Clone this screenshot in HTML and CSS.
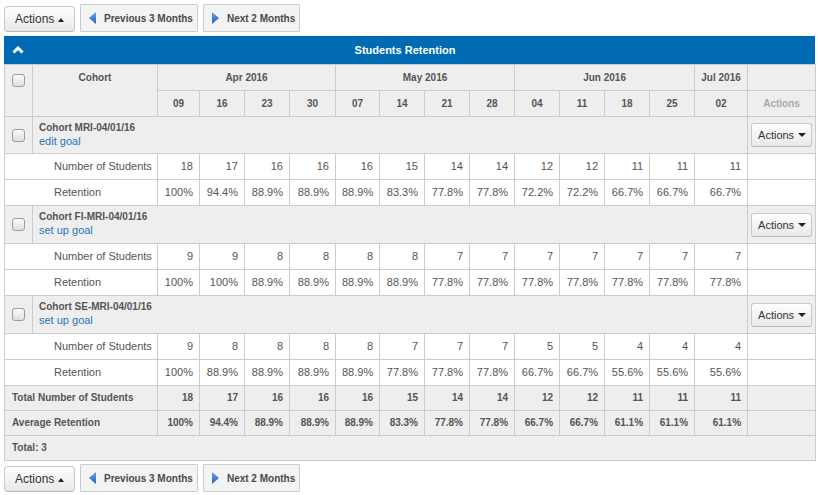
FILE: index.html
```html
<!DOCTYPE html>
<html>
<head>
<meta charset="utf-8">
<link rel="stylesheet" href="styles.css">
</head>
<body>
<div class="page">
  <div class="toolbar">
    <button class="btn-actions">Actions <span class="caret-up"></span></button>
    <button class="btn-nav"><svg class="nav-ico" width="7" height="12" viewBox="0 0 7 12"><defs><linearGradient id="gl" x1="0" y1="0" x2="0" y2="1"><stop offset="0" stop-color="#6aa6e6"/><stop offset="1" stop-color="#1f62b0"/></linearGradient></defs><path d="M7 0 L0 6 L7 12 Z" fill="url(#gl)"/></svg>Previous 3 Months</button>
    <button class="btn-nav"><svg class="nav-ico" width="7" height="12" viewBox="0 0 7 12"><defs><linearGradient id="gr" x1="0" y1="0" x2="0" y2="1"><stop offset="0" stop-color="#6aa6e6"/><stop offset="1" stop-color="#1f62b0"/></linearGradient></defs><path d="M0 0 L7 6 L0 12 Z" fill="url(#gr)"/></svg>Next 2 Months</button>
  </div>

  <div class="panel">
    <div class="panel-head">
      <svg class="chev" width="12" height="8" viewBox="0 0 12 8"><path d="M1.5 6.5 L6 2 L10.5 6.5" fill="none" stroke="#fff" stroke-width="3"/></svg>
      <span class="title">Students Retention</span>
      <span></span>
    </div>
    <table class="grid">
      <colgroup>
        <col class="c-chk"><col class="c-cohort">
        <col class="c-d1"><col class="c-d"><col class="c-d"><col class="c-d46">
        <col class="c-d44"><col class="c-d"><col class="c-d"><col class="c-d">
        <col class="c-d"><col class="c-d"><col class="c-d"><col class="c-d">
        <col class="c-jul"><col class="c-act">
      </colgroup>
      <thead>
        <tr class="hrow">
          <th rowspan="2" class="chk-h"><span class="chk"></span></th>
          <th rowspan="2" class="cohort-h">Cohort</th>
          <th colspan="4">Apr 2016</th>
          <th colspan="4">May 2016</th>
          <th colspan="4">Jun 2016</th>
          <th>Jul 2016</th>
          <th></th>
        </tr>
        <tr class="hrow">
          <th>09</th><th>16</th><th>23</th><th>30</th>
          <th>07</th><th>14</th><th>21</th><th>28</th>
          <th>04</th><th>11</th><th>18</th><th>25</th>
          <th>02</th><th class="act-h">Actions</th>
        </tr>
      </thead>
      <tbody>
        <tr class="cohort">
          <td class="chk-c"><span class="chk"></span></td>
          <td colspan="14" class="cohort-info"><div class="cname">Cohort MRI-04/01/16</div><a class="goal">edit goal</a></td>
          <td class="act-c"><button class="btn-row">Actions <span class="caret-down"></span></button></td>
        </tr>
        <tr class="drow">
          <td colspan="2" class="lbl">Number of Students</td>
          <td>18</td><td>17</td><td>16</td><td>16</td><td>16</td><td>15</td><td>14</td><td>14</td><td>12</td><td>12</td><td>11</td><td>11</td><td>11</td><td></td>
        </tr>
        <tr class="drow">
          <td colspan="2" class="lbl">Retention</td>
          <td>100%</td><td>94.4%</td><td>88.9%</td><td>88.9%</td><td>88.9%</td><td>83.3%</td><td>77.8%</td><td>77.8%</td><td>72.2%</td><td>72.2%</td><td>66.7%</td><td>66.7%</td><td>66.7%</td><td></td>
        </tr>

        <tr class="cohort">
          <td class="chk-c"><span class="chk"></span></td>
          <td colspan="14" class="cohort-info tall"><div class="cname">Cohort FI-MRI-04/01/16</div><a class="goal">set up goal</a></td>
          <td class="act-c"><button class="btn-row">Actions <span class="caret-down"></span></button></td>
        </tr>
        <tr class="drow">
          <td colspan="2" class="lbl">Number of Students</td>
          <td>9</td><td>9</td><td>8</td><td>8</td><td>8</td><td>8</td><td>7</td><td>7</td><td>7</td><td>7</td><td>7</td><td>7</td><td>7</td><td></td>
        </tr>
        <tr class="drow">
          <td colspan="2" class="lbl">Retention</td>
          <td>100%</td><td>100%</td><td>88.9%</td><td>88.9%</td><td>88.9%</td><td>88.9%</td><td>77.8%</td><td>77.8%</td><td>77.8%</td><td>77.8%</td><td>77.8%</td><td>77.8%</td><td>77.8%</td><td></td>
        </tr>

        <tr class="cohort">
          <td class="chk-c"><span class="chk"></span></td>
          <td colspan="14" class="cohort-info tall"><div class="cname">Cohort SE-MRI-04/01/16</div><a class="goal">set up goal</a></td>
          <td class="act-c"><button class="btn-row">Actions <span class="caret-down"></span></button></td>
        </tr>
        <tr class="drow">
          <td colspan="2" class="lbl">Number of Students</td>
          <td>9</td><td>8</td><td>8</td><td>8</td><td>8</td><td>7</td><td>7</td><td>7</td><td>5</td><td>5</td><td>4</td><td>4</td><td>4</td><td></td>
        </tr>
        <tr class="drow">
          <td colspan="2" class="lbl">Retention</td>
          <td>100%</td><td>88.9%</td><td>88.9%</td><td>88.9%</td><td>88.9%</td><td>77.8%</td><td>77.8%</td><td>77.8%</td><td>66.7%</td><td>66.7%</td><td>55.6%</td><td>55.6%</td><td>55.6%</td><td></td>
        </tr>
      </tbody>
      <tfoot>
        <tr class="trow">
          <td colspan="2" class="tlbl">Total Number of Students</td>
          <td>18</td><td>17</td><td>16</td><td>16</td><td>16</td><td>15</td><td>14</td><td>14</td><td>12</td><td>12</td><td>11</td><td>11</td><td>11</td><td></td>
        </tr>
        <tr class="trow">
          <td colspan="2" class="tlbl">Average Retention</td>
          <td>100%</td><td>94.4%</td><td>88.9%</td><td>88.9%</td><td>88.9%</td><td>83.3%</td><td>77.8%</td><td>77.8%</td><td>66.7%</td><td>66.7%</td><td>61.1%</td><td>61.1%</td><td>61.1%</td><td></td>
        </tr>
        <tr class="trow">
          <td colspan="16" class="tlbl">Total: 3</td>
        </tr>
      </tfoot>
    </table>
  </div>

  <div class="toolbar bottom">
    <button class="btn-actions">Actions <span class="caret-up"></span></button>
    <button class="btn-nav"><svg class="nav-ico" width="7" height="12" viewBox="0 0 7 12"><path d="M7 0 L0 6 L7 12 Z" fill="url(#gl)"/></svg>Previous 3 Months</button>
    <button class="btn-nav"><svg class="nav-ico" width="7" height="12" viewBox="0 0 7 12"><path d="M0 0 L7 6 L0 12 Z" fill="url(#gr)"/></svg>Next 2 Months</button>
  </div>
</div>
</body>
</html>
```

FILE: styles.css
```css
html, body {
  margin: 0;
  padding: 0;
  background: #fff;
}
body {
  font-family: "Liberation Sans", Arial, sans-serif;
  font-size: 11px;
  color: #555;
}
.page {
  padding: 4px 3px 0 4px;
}
.toolbar {
  display: flex;
  align-items: flex-start;
  gap: 5px;
  height: 28px;
}
.toolbar.bottom {
  margin-top: 3px;
}
button {
  font-family: "Liberation Sans", Arial, sans-serif;
  margin: 0;
  cursor: pointer;
}
.btn-actions {
  margin-top: 2px;
  width: 71px;
  height: 26px;
  padding: 0 0 0 10px;
  display: flex;
  align-items: center;
  gap: 4px;
  font-size: 12px;
  color: #333;
  background: linear-gradient(#fefefe, #e8e8e8);
  border: 1px solid #c8c8c8;
  border-bottom-color: #b8b8b8;
  border-radius: 4px;
  box-shadow: inset 0 1px 0 #fff;
}
.caret-up {
  width: 0;
  height: 0;
  border-left: 3.5px solid transparent;
  border-right: 3.5px solid transparent;
  border-bottom: 4px solid #222;
  margin-top: 1px;
}
.caret-down {
  width: 0;
  height: 0;
  border-left: 4px solid transparent;
  border-right: 4px solid transparent;
  border-top: 4px solid #222;
}
.btn-nav {
  height: 28px;
  padding: 0 4px 0 8px;
  display: flex;
  align-items: center;
  gap: 8px;
  font-size: 10px;
  font-weight: bold;
  color: #4a4a4a;
  background: #f3f3f3;
  border: 1px solid #ccc;
  border-radius: 1px;
}
.nav-ico {
  display: block;
}

.panel {
  width: 811px;
  margin-top: 4px;
}
.panel-head {
  height: 28px;
  background: #006ab4;
  display: grid;
  grid-template-columns: 1fr auto 1fr;
  align-items: center;
  color: #fff;
  font-weight: bold;
  font-size: 11px;
}
.chev {
  margin-left: 8px;
  display: block;
}
.title {
  margin-left: -9px;
}

table.grid {
  width: 811px;
  border-collapse: collapse;
  table-layout: fixed;
}
.c-chk { width: 28px; }
.c-cohort { width: 125px; }
.c-d1 { width: 42px; }
.c-d { width: 45px; }
.c-d46 { width: 46px; }
.c-d44 { width: 44px; }
.c-jul { width: 53px; }
.c-act { width: 68px; }

.grid th, .grid td {
  border: 1px solid #ccc;
  padding: 6px 6px;
  line-height: 13px;
  white-space: nowrap;
  overflow: hidden;
}
.grid thead th {
  background: #eee;
  font-size: 10px;
  font-weight: bold;
  color: #555;
  text-align: center;
}
.grid thead th.chk-h {
  vertical-align: top;
  padding: 8px 0 0 0;
}
.grid thead th.cohort-h {
  vertical-align: top;
}
.grid thead th.act-h {
  color: #aaa;
}
.chk {
  display: inline-block;
  width: 11px;
  height: 11px;
  border: 1px solid #9c9c9c;
  border-radius: 3px;
  background: linear-gradient(#fbfbfb, #dedede);
  vertical-align: middle;
}
.grid td.chk-c {
  text-align: center;
  padding: 0;
  vertical-align: middle;
  background: #eee;
}
.cohort td {
  background: #eee;
}
.grid td.cohort-info {
  padding: 3px 6px 5px 6px;
  vertical-align: top;
}
.grid td.cohort-info.tall {
  padding-bottom: 6px;
}
.cname {
  font-size: 10px;
  font-weight: bold;
  color: #555;
  line-height: 13px;
  margin-top: 1px;
}
.goal {
  display: block;
  color: #1f74bd;
  font-size: 11px;
  line-height: 14px;
  text-decoration: none;
}
.grid td.act-c {
  padding: 0 3px 0 3px;
  text-align: right;
  vertical-align: middle;
}
.btn-row {
  width: 61px;
  height: 24px;
  padding: 0 0 0 6px;
  display: inline-flex;
  align-items: center;
  gap: 4px;
  font-size: 11px;
  color: #333;
  background: linear-gradient(#fefefe, #e9e9e9);
  border: 1px solid #c8c8c8;
  border-bottom-color: #b8b8b8;
  border-radius: 3px;
  vertical-align: middle;
}
.drow td {
  background: #fff;
  text-align: right;
  color: #555;
}
.drow td.lbl {
  text-align: left;
  padding-left: 49px;
}
.trow td {
  background: #eee;
  text-align: right;
  font-size: 10px;
  font-weight: bold;
  color: #555;
  padding: 6px 6px;
  line-height: 12px;
}
.trow td.tlbl {
  text-align: left;
  padding-left: 7px;
}
```
